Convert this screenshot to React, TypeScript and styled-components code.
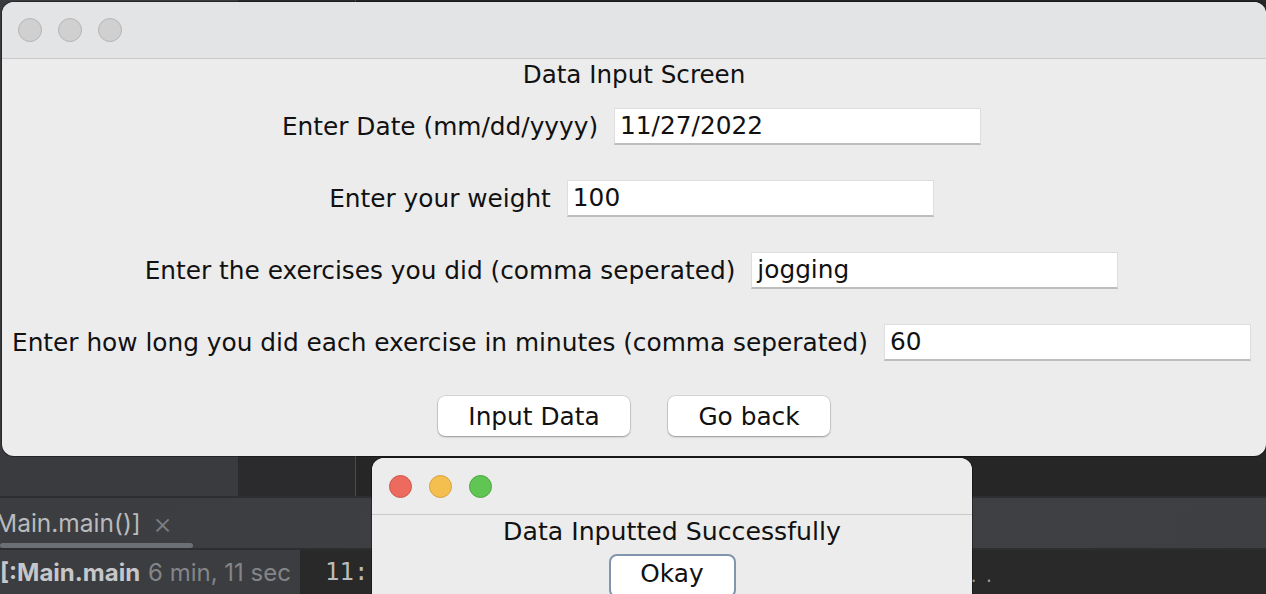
import React from "react";
import styled, { createGlobalStyle } from "styled-components";

const Global = createGlobalStyle`
  html, body { margin: 0; padding: 0; background: #262627; }
  * { box-sizing: border-box; }
`;

const Desktop = styled.div`
  position: relative;
  width: 1266px;
  height: 594px;
  overflow: hidden;
  background: #262627;
  font-family: "DejaVu Sans", "Liberation Sans", sans-serif;
`;

/* ---------- IDE background ---------- */
const Ide = styled.div`
  display: flex;
  flex-direction: column;
  width: 100%;
  height: 100%;
`;

const IdeTop = styled.div`
  display: flex;
  height: 496px;
`;

const IdePane = styled.div<{ $w?: number; $bg: string; $line?: boolean }>`
  width: ${(p) => (p.$w ? `${p.$w}px` : "auto")};
  flex: ${(p) => (p.$w ? "none" : "1")};
  background: ${(p) => p.$bg};
  border-right: ${(p) => (p.$line ? "1px solid #4b4c4f" : "none")};
`;

const TabBar = styled.div`
  position: relative;
  height: 52px;
  border-top: 2px solid #2d2e30;
  background: linear-gradient(90deg, #3b3d40, #3e4043 60%, #3d3f42);
  display: flex;
  align-items: center;
  font-family: Inter, "Liberation Sans", sans-serif;
  font-size: 24.5px;
  color: #b9babd;
`;

const TabLabel = styled.span`
  margin-left: -5px;
`;

const TabClose = styled.span`
  margin-left: 12px;
  color: #7b7d81;
  font-size: 30px;
  font-weight: 300;
  line-height: 1;
`;

const ScrollThumb = styled.div`
  position: absolute;
  left: 0;
  bottom: 0;
  width: 193px;
  height: 5px;
  border-radius: 3px;
  background: #6c6f73;
`;

const StatusRow = styled.div`
  flex: 1;
  display: flex;
  border-top: 2px solid #2d2e30;
`;

const RunCell = styled.div`
  width: 300px;
  background: #3b3d40;
  display: flex;
  align-items: center;
  font-family: Inter, "Liberation Sans", sans-serif;
  font-size: 24px;
  white-space: nowrap;
  overflow: hidden;
`;

const RunName = styled.span`
  display: inline-block;
  width: 141px;
  overflow: hidden;
  font-weight: 700;
  color: #c6c7ca;
`;

const RunTime = styled.span`
  margin-left: 7px;
  color: #838589;
`;

const ConsoleCell = styled.div`
  flex: 1;
  background: #29292a;
  display: flex;
  align-items: center;
  padding-left: 25px;
  font-family: "DejaVu Sans Mono", "Liberation Mono", monospace;
  font-size: 24px;
  color: #bcbcbc;
`;

const Dots = styled.span`
  margin-left: auto;
  margin-right: 265px;
  font-family: "DejaVu Sans", sans-serif;
  color: #9a9a9a;
  letter-spacing: 9px;
  font-size: 20px;
  padding-top: 6px;
`;

/* ---------- Windows ---------- */
const Window = styled.div<{ $left: number; $top: number; $w: number; $h: number }>`
  position: absolute;
  left: ${(p) => p.$left}px;
  top: ${(p) => p.$top}px;
  width: ${(p) => p.$w}px;
  height: ${(p) => p.$h}px;
  border-radius: 12px;
  overflow: hidden;
  background: #ececec;
  display: flex;
  flex-direction: column;
  box-shadow: 0 0 0 1px rgba(0, 0, 0, 0.35);
`;

const TitleBar = styled.div<{ $bg: string; $h: number; $pad: number; $gap: number }>`
  height: ${(p) => p.$h}px;
  flex: none;
  background: ${(p) => p.$bg};
  border-bottom: 1px solid #c9c9c9;
  display: flex;
  align-items: center;
  padding-left: ${(p) => p.$pad}px;
  gap: ${(p) => p.$gap}px;
`;

const Light = styled.span<{ $fill: string; $edge: string; $size: number }>`
  width: ${(p) => p.$size}px;
  height: ${(p) => p.$size}px;
  border-radius: 50%;
  background: ${(p) => p.$fill};
  border: 1px solid ${(p) => p.$edge};
`;

const Body = styled.div`
  flex: 1;
  display: flex;
  flex-direction: column;
  align-items: center;
`;

const Heading = styled.div`
  font-size: 24.6px;
  line-height: 30px;
  color: #111;
  margin-top: 1px;
  margin-bottom: 18px;
`;

const Form = styled.div`
  display: flex;
  flex-direction: column;
  align-items: center;
  gap: 36px;
  padding-right: 5px;
`;

const Row = styled.div`
  display: flex;
  align-items: center;
  gap: 16px;
  height: 36px;
`;

const Label = styled.span`
  font-size: 24.8px;
  color: #111;
  white-space: nowrap;
`;

const Field = styled.div`
  width: 367px;
  height: 37px;
  background: #fff;
  border: 1px solid #dedede;
  border-bottom: 2px solid #bdbdbd;
  font-size: 24.8px;
  line-height: 33px;
  padding-left: 5px;
  color: #111;
`;

const Buttons = styled.div`
  display: flex;
  gap: 38px;
  margin-top: 36px;
`;

const Button = styled.div<{ $w: number }>`
  width: ${(p) => p.$w}px;
  height: 40px;
  border-radius: 7px;
  background: #fff;
  box-shadow: 0 0 0 0.5px rgba(0, 0, 0, 0.18), 0 1px 2px rgba(0, 0, 0, 0.3);
  display: flex;
  align-items: center;
  justify-content: center;
  font-size: 24.8px;
  color: #111;
`;

const Message = styled.div`
  font-size: 25.2px;
  line-height: 30px;
  color: #111;
  margin-top: 2px;
`;

const OkayButton = styled.div`
  margin-top: 7px;
  width: 127px;
  height: 44px;
  border-radius: 8px;
  background: #fff;
  border: 2px solid #8195ad;
  display: flex;
  align-items: center;
  justify-content: center;
  font-size: 24.8px;
  color: #111;
  padding-bottom: 5px;
`;

export default function App() {
  const rows: [string, string][] = [
    ["Enter Date (mm/dd/yyyy)", "11/27/2022"],
    ["Enter your weight", "100"],
    ["Enter the exercises you did (comma seperated)", "jogging"],
    ["Enter how long you did each exercise in minutes (comma seperated)", "60"],
  ];
  return (
    <>
      <Global />
      <Desktop>
        <Ide>
          <IdeTop>
            <IdePane $w={238} $bg="#393b3e" />
            <IdePane $w={118} $bg="#2b2b2d" $line />
            <IdePane $bg="#262627" />
          </IdeTop>
          <TabBar>
            <TabLabel>Main.main()]</TabLabel>
            <TabClose>×</TabClose>
            <ScrollThumb />
          </TabBar>
          <StatusRow>
            <RunCell>
              <RunName>[:Main.main</RunName>
              <RunTime>6 min, 11 sec</RunTime>
            </RunCell>
            <ConsoleCell>
              11:
              <Dots>..</Dots>
            </ConsoleCell>
          </StatusRow>
        </Ide>

        <Window $left={2} $top={2} $w={1264} $h={454}>
          <TitleBar $bg="#e3e4e6" $h={57} $pad={16} $gap={16}>
            <Light $size={24} $fill="#d0d0d0" $edge="#b6b6b6" />
            <Light $size={24} $fill="#d0d0d0" $edge="#b6b6b6" />
            <Light $size={24} $fill="#d0d0d0" $edge="#b6b6b6" />
          </TitleBar>
          <Body>
            <Heading>Data Input Screen</Heading>
            <Form>
              {rows.map(([label, value]) => (
                <Row key={label}>
                  <Label>{label}</Label>
                  <Field>{value}</Field>
                </Row>
              ))}
            </Form>
            <Buttons>
              <Button $w={192}>Input Data</Button>
              <Button $w={162}>Go back</Button>
            </Buttons>
          </Body>
        </Window>

        <Window $left={372} $top={458} $w={600} $h={150}>
          <TitleBar $bg="#ececec" $h={57} $pad={17} $gap={17}>
            <Light $size={23} $fill="#ec6a5e" $edge="#d2564b" />
            <Light $size={23} $fill="#f4bf4f" $edge="#d8a23a" />
            <Light $size={23} $fill="#61c554" $edge="#4aa83f" />
          </TitleBar>
          <Body>
            <Message>Data Inputted Successfully</Message>
            <OkayButton>Okay</OkayButton>
          </Body>
        </Window>
      </Desktop>
    </>
  );
}
